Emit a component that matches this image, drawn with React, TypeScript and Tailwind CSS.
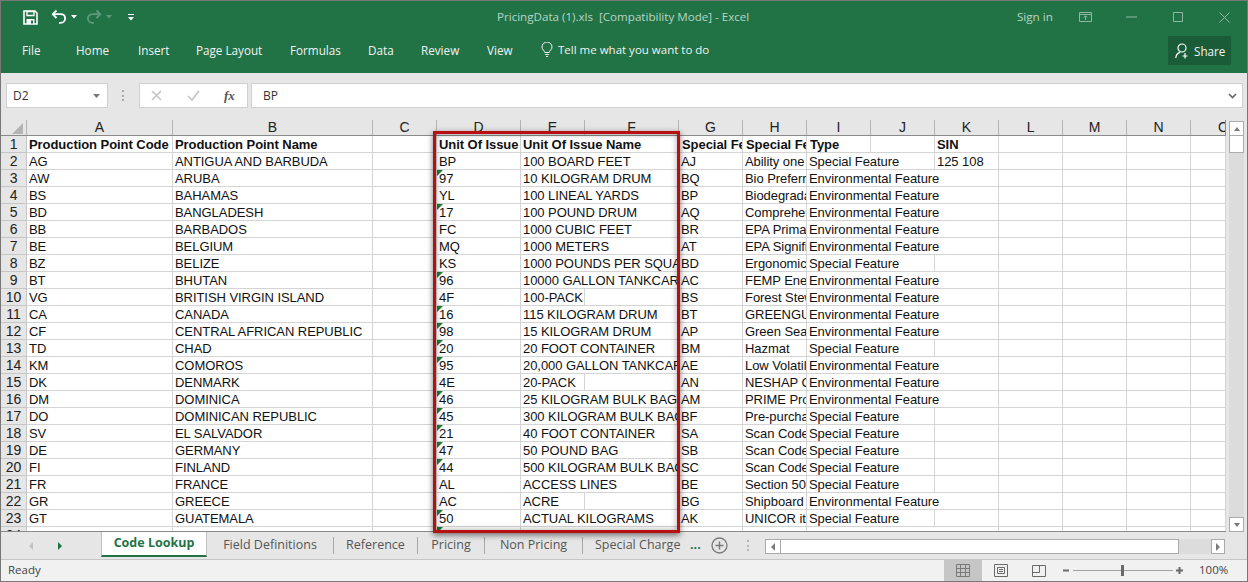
import React from 'react';

type Row = {
    a: string; b: string; d: string; e: string; g: string; h: string;
    env?: boolean; sin?: string; flag?: boolean; shortName?: boolean;
};

const ENV = 'Environmental Feature';
const SPECIAL = 'Special Feature';

const rows: Row[] = [
    { a: 'AG', b: 'ANTIGUA AND BARBUDA', d: 'BP', e: '100 BOARD FEET', g: 'AJ', h: 'Ability one', sin: '125 108' },
    { a: 'AW', b: 'ARUBA', d: '97', e: '10 KILOGRAM DRUM', g: 'BQ', h: 'Bio Preferred', env: true, flag: true },
    { a: 'BS', b: 'BAHAMAS', d: 'YL', e: '100 LINEAL YARDS', g: 'BP', h: 'Biodegradable', env: true },
    { a: 'BD', b: 'BANGLADESH', d: '17', e: '100 POUND DRUM', g: 'AQ', h: 'Comprehensive', env: true, flag: true },
    { a: 'BB', b: 'BARBADOS', d: 'FC', e: '1000 CUBIC FEET', g: 'BR', h: 'EPA Primary', env: true },
    { a: 'BE', b: 'BELGIUM', d: 'MQ', e: '1000 METERS', g: 'AT', h: 'EPA Significant', env: true },
    { a: 'BZ', b: 'BELIZE', d: 'KS', e: '1000 POUNDS PER SQUARE', g: 'BD', h: 'Ergonomic' },
    { a: 'BT', b: 'BHUTAN', d: '96', e: '10000 GALLON TANKCAR', g: 'AC', h: 'FEMP Energy', env: true, flag: true },
    { a: 'VG', b: 'BRITISH VIRGIN ISLAND', d: '4F', e: '100-PACK', g: 'BS', h: 'Forest Stewardship', env: true, shortName: true },
    { a: 'CA', b: 'CANADA', d: '16', e: '115 KILOGRAM DRUM', g: 'BT', h: 'GREENGUARD', env: true, flag: true },
    { a: 'CF', b: 'CENTRAL AFRICAN REPUBLIC', d: '98', e: '15 KILOGRAM DRUM', g: 'AP', h: 'Green Seal', env: true, flag: true },
    { a: 'TD', b: 'CHAD', d: '20', e: '20 FOOT CONTAINER', g: 'BM', h: 'Hazmat', flag: true },
    { a: 'KM', b: 'COMOROS', d: '95', e: '20,000 GALLON TANKCAR', g: 'AE', h: 'Low Volatile', env: true, flag: true },
    { a: 'DK', b: 'DENMARK', d: '4E', e: '20-PACK', g: 'AN', h: 'NESHAP Compliant', env: true, shortName: true },
    { a: 'DM', b: 'DOMINICA', d: '46', e: '25 KILOGRAM BULK BAG', g: 'AM', h: 'PRIME Product', env: true, flag: true },
    { a: 'DO', b: 'DOMINICAN REPUBLIC', d: '45', e: '300 KILOGRAM BULK BAG', g: 'BF', h: 'Pre-purchase', flag: true },
    { a: 'SV', b: 'EL SALVADOR', d: '21', e: '40 FOOT CONTAINER', g: 'SA', h: 'Scan Code', flag: true },
    { a: 'DE', b: 'GERMANY', d: '47', e: '50 POUND BAG', g: 'SB', h: 'Scan Code', flag: true },
    { a: 'FI', b: 'FINLAND', d: '44', e: '500 KILOGRAM BULK BAG', g: 'SC', h: 'Scan Code', flag: true },
    { a: 'FR', b: 'FRANCE', d: 'AL', e: 'ACCESS LINES', g: 'BE', h: 'Section 508' },
    { a: 'GR', b: 'GREECE', d: 'AC', e: 'ACRE', g: 'BG', h: 'Shipboard', env: true, shortName: true },
    { a: 'GT', b: 'GUATEMALA', d: '50', e: 'ACTUAL KILOGRAMS', g: 'AK', h: 'UNICOR items', flag: true },
    { a: 'GN', b: 'GUINEA', d: '', e: '', g: 'BH', h: 'Women Owned', env: true, flag: true },
];

const gridCols = 'grid grid-cols-[26px_146px_200px_64px_84px_64px_94px_64px_64px_64px_64px_64px_64px_64px_64px_35px]';
const letters = ['A', 'B', 'C', 'D', 'E', 'F', 'G', 'H', 'I', 'J', 'K', 'L', 'M', 'N'];

const Cell: React.FC<{ className?: string; children?: React.ReactNode }> = ({ className = '', children }) => (
    <div className={`h-[17px] overflow-hidden whitespace-nowrap border-r border-b border-[#d4d4d4] bg-white pl-[2px] leading-[17px] ${className}`}>
        {children}
    </div>
);

const RowHead: React.FC<{ n: number }> = ({ n }) => (
    <div className="h-[17px] border-r border-b border-[#c6c6c6] bg-[#e6e6e6] text-center leading-[17px] text-[#222] text-[14px]">{n}</div>
);

const GridRow: React.FC<{ row: Row; n: number }> = ({ row, n }) => (
    <div className={gridCols}>
        <RowHead n={n} />
        <Cell>{row.a}</Cell>
        <Cell>{row.b}</Cell>
        <Cell />
        <Cell className="relative">
            {row.flag && (
                <span className="absolute left-0 top-0 h-0 w-0 border-t-[6px] border-r-[6px] border-t-[#1e7b34] border-r-transparent" />
            )}
            {row.d}
        </Cell>
        {row.shortName ? (
            <>
                <Cell>{row.e}</Cell>
                <Cell />
            </>
        ) : (
            <Cell className="col-span-2">{row.e}</Cell>
        )}
        <Cell>{row.g}</Cell>
        <Cell>{row.h}</Cell>
        {row.env ? (
            <Cell className="col-span-3">{ENV}</Cell>
        ) : (
            <>
                <Cell className="col-span-2">{SPECIAL}</Cell>
                <Cell>{row.sin}</Cell>
            </>
        )}
        <Cell />
        <Cell />
        <Cell />
        <Cell />
    </div>
);

const Spreadsheet: React.FC = () => (
    <div className="h-[412px] w-[1225px] shrink-0 overflow-hidden border-b border-[#8a8a8a] font-['Liberation_Sans',Arial,sans-serif] text-[13px] tracking-[-0.06px] text-[#111]">
        <div className={`${gridCols} h-[16px] border-b border-[#8a8a8a] bg-[#e6e6e6]`}>
            <div className="relative border-r border-[#b4b4b4]">
                <span className="absolute bottom-[1px] right-[3px] h-0 w-0 border-b-[11px] border-l-[11px] border-b-[#b4b4b4] border-l-transparent" />
            </div>
            {letters.map(l => (
                <div key={l} className="overflow-hidden border-r border-[#b4b4b4] text-center text-[14px] leading-[15px] text-[#222]">{l}</div>
            ))}
            <div className="overflow-hidden border-r border-[#8a8a8a] pl-[27px] text-[14px] leading-[15px] text-[#222]">O</div>
        </div>
        <div className={gridCols}>
            <RowHead n={1} />
            <Cell className="font-bold">Production Point Code</Cell>
            <Cell className="font-bold">Production Point Name</Cell>
            <Cell />
            <Cell className="font-bold">Unit Of Issue</Cell>
            <Cell className="col-span-2 font-bold">Unit Of Issue Name</Cell>
            <Cell className="pl-[3px] font-bold">Special Feature Code</Cell>
            <Cell className="pl-[3px] font-bold">Special Feature Name</Cell>
            <Cell className="pl-[3px] font-bold">Type</Cell>
            <Cell />
            <Cell className="font-bold">SIN</Cell>
            <Cell />
            <Cell />
            <Cell />
            <Cell />
        </div>
        {rows.map((row, i) => <GridRow key={row.a} row={row} n={i + 2} />)}
    </div>
);

const ScrollBtn: React.FC<{ dir: 'up' | 'down' | 'left' | 'right'; className?: string }> = ({ dir, className = '' }) => {
    const points = {
        up: '2,7 8,7 5,3',
        down: '2,3 8,3 5,7',
        left: '7,1 7,9 3,5',
        right: '3,1 3,9 7,5',
    };
    return (
        <div className={`flex items-center justify-center border border-[#ababab] bg-white ${className}`}>
            <svg width="10" height="10" viewBox="0 0 10 10"><polygon points={points[dir]} fill="#7a7a7a" /></svg>
        </div>
    );
};

const Ribbon: React.FC = () => (
    <div className="h-[72px] shrink-0 whitespace-nowrap bg-[#217346] font-['Open_Sans',sans-serif]">
        <div className="flex h-[32px] items-center">
            <svg className="ml-[22px] shrink-0" width="15" height="15" viewBox="0 0 15 15" fill="none">
                <path d="M1 1h11l2 2v11H1z" stroke="#fff" strokeWidth="1.6" />
                <path d="M4 1.5h7v4H4z" stroke="#fff" strokeWidth="1.4" />
                <path d="M3.5 9h8v5h-8z" fill="#fff" />
                <path d="M8 10.5h2v3H8z" fill="#217346" />
            </svg>
            <svg className="ml-[13px] shrink-0" width="16" height="16" viewBox="0 0 16 16" fill="none">
                <path d="M5.5 1.5 1.8 5.2 5.5 9" stroke="#fff" strokeWidth="1.8" />
                <path d="M2 5.2h7.5c3 0 4.6 2 4.6 4.2s-1.6 4.4-4.6 4.4H8" stroke="#fff" strokeWidth="1.8" />
            </svg>
            <svg className="ml-[4px] shrink-0" width="6" height="4" viewBox="0 0 6 4"><polygon points="0,0 6,0 3,3.5" fill="#fff" /></svg>
            <svg className="ml-[9px] shrink-0" width="16" height="16" viewBox="0 0 16 16" fill="none">
                <path d="M10.5 1.5 14.2 5.2 10.5 9" stroke="#5f9a7b" strokeWidth="1.8" />
                <path d="M14 5.2H6.5c-3 0-4.6 2-4.6 4.2s1.6 4.4 4.6 4.4H8" stroke="#5f9a7b" strokeWidth="1.8" />
            </svg>
            <svg className="ml-[4px] shrink-0" width="6" height="4" viewBox="0 0 6 4"><polygon points="0,0 6,0 3,3.5" fill="#5f9a7b" /></svg>
            <svg className="ml-[16px] shrink-0" width="6" height="7" viewBox="0 0 6 7">
                <path d="M0 .5h6" stroke="#fff" />
                <polygon points="0,3 6,3 3,6.5" fill="#fff" />
            </svg>
            <div className="ml-[363px] w-[520px] whitespace-pre text-[11.6px] text-[#b9d3c5]">PricingData (1).xls  [Compatibility Mode] - Excel</div>
            <div className="w-[62px] text-[11.6px] text-[#b9d3c5]">Sign in</div>
            <svg className="shrink-0" width="13" height="10" viewBox="0 0 13 10" fill="none" stroke="#8fb8a2">
                <path d="M.5.5h12v9H.5zM.5 2.5h12M6.5 8V4M4.8 5.5l1.7-1.7 1.7 1.7" />
            </svg>
            <svg className="ml-[34px] shrink-0" width="11" height="2" viewBox="0 0 11 2"><path d="M0 1h11" stroke="#8fb8a2" /></svg>
            <svg className="ml-[36px] shrink-0" width="10" height="10" viewBox="0 0 10 10" fill="none"><path d="M.5.5h9v9h-9z" stroke="#8fb8a2" /></svg>
            <svg className="ml-[36px] shrink-0" width="11" height="11" viewBox="0 0 11 11" fill="none"><path d="m.5.5 10 10m0-10-10 10" stroke="#8fb8a2" /></svg>
        </div>
        <div className="flex h-[40px] items-start pl-[21px] pt-[7px] text-[11.7px] leading-[20px] text-[#f2f2f2]">
            <span className="w-[54px] shrink-0">File</span>
            <span className="w-[62px] shrink-0">Home</span>
            <span className="w-[58px] shrink-0">Insert</span>
            <span className="w-[94px] shrink-0">Page Layout</span>
            <span className="w-[78px] shrink-0">Formulas</span>
            <span className="w-[53px] shrink-0">Data</span>
            <span className="w-[66px] shrink-0">Review</span>
            <span className="w-[54px] shrink-0">View</span>
            <svg className="mt-[2px] shrink-0" width="12" height="15" viewBox="0 0 12 15" fill="none" stroke="#f2f2f2">
                <path d="M3.8 10.5C3.4 8.5 1 7.5 1 5a5 5 0 0 1 10 0c0 2.5-2.4 3.5-2.8 5.5zM4.2 12.5h3.6M5 14.5h2" />
            </svg>
            <span className="ml-[5px] w-[610px] shrink-0 text-[11.5px]">Tell me what you want to do</span>
            <div className="mt-[-4px] flex h-[29px] w-[63px] shrink-0 items-center bg-[#1a5c38] pl-[7px]">
                <svg className="shrink-0" width="15" height="16" viewBox="0 0 15 16" fill="none" stroke="#fff">
                    <circle cx="7" cy="5" r="4" strokeWidth="1.2" />
                    <path d="M.8 15c.3-3.2 2-5 4.2-5.6M10 10v5.5M7.5 13h5" strokeWidth="1.2" />
                </svg>
                <span className="ml-[4px]">Share</span>
            </div>
        </div>
    </div>
);

const FormulaBar: React.FC = () => (
    <div className="flex h-[47px] shrink-0 items-start bg-[#e6e6e6] pl-[5px] pt-[10px] font-['Open_Sans',sans-serif] text-[12px]">
        <div className="flex h-[25px] w-[102px] items-center justify-between border border-[#d0d0d0] bg-white pl-[6px] pr-[7px] text-[#333]">
            D2
            <svg width="7" height="4" viewBox="0 0 7 4"><polygon points="0,0 7,0 3.5,4" fill="#777" /></svg>
        </div>
        <div className="ml-[14px] mt-[7px] flex h-[11px] w-[3px] flex-col justify-between">
            <span className="h-[2px] w-[2px] bg-[#a8a8a8]" />
            <span className="h-[2px] w-[2px] bg-[#a8a8a8]" />
            <span className="h-[2px] w-[2px] bg-[#a8a8a8]" />
        </div>
        <div className="ml-[14px] flex h-[25px] w-[109px] items-center border border-[#d0d0d0] bg-white">
            <svg className="ml-[11px]" width="11" height="11" viewBox="0 0 11 11" fill="none"><path d="m1 1 9 9m0-9-9 9" stroke="#c4c4c4" strokeWidth="1.6" /></svg>
            <svg className="ml-[25px]" width="13" height="11" viewBox="0 0 13 11" fill="none"><path d="m1 6 4 4 7-9" stroke="#c4c4c4" strokeWidth="1.6" /></svg>
            <span className="ml-[24px] font-['Liberation_Serif',serif] text-[13px] font-bold italic text-[#555]">fx</span>
        </div>
        <div className="ml-[3px] flex h-[25px] w-[992px] items-center justify-between border border-[#d0d0d0] bg-white pl-[11px] pr-[5px] text-[#333]">
            BP
            <svg width="9" height="6" viewBox="0 0 9 6" fill="none"><path d="m1 1 3.5 3.5L8 1" stroke="#666" strokeWidth="1.6" /></svg>
        </div>
    </div>
);

const SheetTab: React.FC<{ label: string; width: string }> = ({ label, width }) => (
    <div className={`flex h-[26px] shrink-0 items-center justify-center ${width}`}>
        <span className="flex h-[17px] w-full items-center justify-center border-r border-[#a8a8a8] text-[#555]">{label}</span>
    </div>
);

const SheetTabs: React.FC = () => (
    <div className="flex h-[28px] shrink-0 items-start border-b border-[#c6c6c6] bg-[#e6e6e6] font-['Open_Sans',sans-serif] text-[12.5px]">
        <div className="flex h-[27px] w-[100px] shrink-0 items-center">
            <svg className="ml-[28px]" width="5" height="8" viewBox="0 0 5 8"><polygon points="4,0 4,8 0,4" fill="#c2c2c2" /></svg>
            <svg className="ml-[24px]" width="5" height="8" viewBox="0 0 5 8"><polygon points="0,0 0,8 4,4" fill="#217346" /></svg>
        </div>
        <div className="flex h-[25px] w-[106px] shrink-0 items-center justify-center border-x border-[#c0c0c0] border-b-2 border-b-[#217346] bg-white font-bold text-[#217346]">Code Lookup</div>
        <SheetTab label="Field Definitions" width="w-[127px]" />
        <SheetTab label="Reference" width="w-[84px]" />
        <SheetTab label="Pricing" width="w-[67px]" />
        <SheetTab label="Non Pricing" width="w-[98px]" />
        <div className="flex h-[26px] w-[98px] shrink-0 items-center overflow-hidden whitespace-nowrap pl-[12px] text-[#555]">Special Charges</div>
        <span className="ml-[9px] mt-[3px] font-bold leading-[20px] text-[#217346]">...</span>
        <svg className="ml-[10px] mt-[5px]" width="17" height="17" viewBox="0 0 17 17" fill="none" stroke="#7b7b7b">
            <circle cx="8.5" cy="8.5" r="7.5" strokeWidth="1.3" />
            <path d="M8.5 4.5v8M4.5 8.5h8" strokeWidth="1.5" />
        </svg>
        <div className="ml-[19px] mt-[8px] flex h-[11px] w-[3px] flex-col justify-between">
            <span className="h-[2px] w-[2px] bg-[#b4b4b4]" />
            <span className="h-[2px] w-[2px] bg-[#b4b4b4]" />
            <span className="h-[2px] w-[2px] bg-[#b4b4b4]" />
        </div>
        <div className="ml-[15px] mt-[7px] flex h-[15px] w-[460px] shrink-0 bg-[#dcdcdc]">
            <ScrollBtn dir="left" className="w-[16px]" />
            <div className="w-[398px] border-y border-r border-[#ababab] bg-white" />
            <div className="w-[32px]" />
            <ScrollBtn dir="right" className="w-[14px]" />
        </div>
    </div>
);

const StatusBar: React.FC = () => (
    <div className="flex h-[21px] shrink-0 items-center bg-[#f1f1f1] pl-[7px] font-['Open_Sans',sans-serif] text-[11.5px] text-[#444]">
        <span className="mb-[2px] w-[936px]">Ready</span>
        <div className="flex h-full w-[38px] items-center justify-center bg-[#c6c6c6]">
            <svg width="14" height="13" viewBox="0 0 14 13" fill="none" stroke="#7a7a7a">
                <path d="M.5.5h13v12H.5zM.5 4.5h13M.5 8.5h13M4.5.5v12M9.5.5v12" />
            </svg>
        </div>
        <svg className="ml-[12px]" width="14" height="13" viewBox="0 0 14 13" fill="none" stroke="#6a6a6a">
            <path d="M.5.5h13v12H.5zM3.5 3.5h7v6h-7zM5 5.5h4M5 7.5h4" />
        </svg>
        <svg className="ml-[24px]" width="14" height="12" viewBox="0 0 14 12" fill="none" stroke="#6a6a6a">
            <path d="M.5.5h13v11H.5zM.5 7.5h7V.5" />
        </svg>
        <svg className="ml-[17px]" width="116" height="13" viewBox="0 0 116 13" fill="none">
            <path d="M0 6.5h6" stroke="#6a6a6a" strokeWidth="2" />
            <path d="M10 6.5h100" stroke="#a0a0a0" />
            <path d="M58 1h3v11h-3z" fill="#6a6a6a" />
        </svg>
        <svg className="ml-[-4px]" width="9" height="9" viewBox="0 0 9 9"><path d="M4.5 1v7M1 4.5h7" stroke="#6a6a6a" strokeWidth="2" /></svg>
        <span className="mb-[2px] ml-[15px]">100%</span>
    </div>
);

export default function App() {
    return (
        <div className="relative flex h-[582px] w-[1248px] flex-col overflow-hidden border border-[#777]">
            <Ribbon />
            <FormulaBar />
            <div className="flex h-[412px] shrink-0 bg-[#e6e6e6]">
                <Spreadsheet />
                <div className="ml-[3px] mt-[1px] flex h-[411px] w-[15px] flex-col bg-[#dcdcdc]">
                    <ScrollBtn dir="up" className="h-[15px]" />
                    <div className="h-[17px] border-x border-b border-[#ababab] bg-white" />
                    <div className="flex-1" />
                    <ScrollBtn dir="down" className="h-[15px]" />
                </div>
            </div>
            <SheetTabs />
            <StatusBar />
            {/* red highlight drawn over the sheet */}
            <div className="absolute left-[432px] top-[130px] h-[402px] w-[247px] border-[3.5px] border-[#b81010] shadow-[0_2px_6px_rgba(0,0,0,0.55),inset_0_0_6px_rgba(0,0,0,0.35)]" />
        </div>
    );
}
